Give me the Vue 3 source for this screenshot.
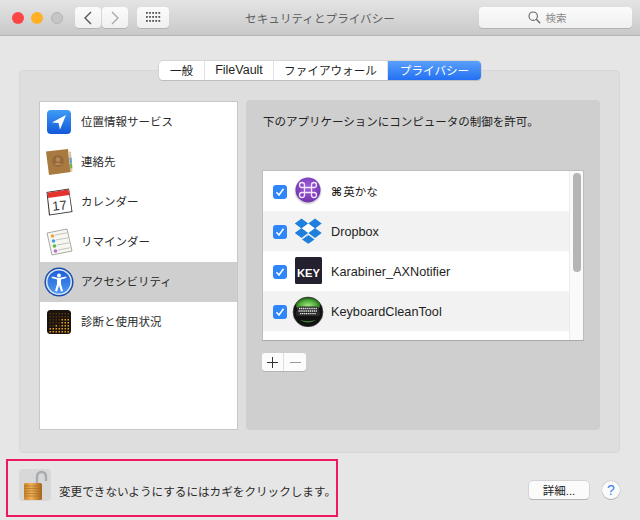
<script setup>
const tabs = [
  { label: '一般', w: 46 },
  { label: 'FileVault', w: 69, latin: true },
  { label: 'ファイアウォール', w: 114 },
  { label: 'プライバシー', w: 93, active: true },
]
const services = [
  { id: 'loc', label: '位置情報サービス' },
  { id: 'contacts', label: '連絡先' },
  { id: 'cal', label: 'カレンダー' },
  { id: 'rem', label: 'リマインダー' },
  { id: 'acc', label: 'アクセシビリティ', selected: true },
  { id: 'diag', label: '診断と使用状況' },
]
const apps = [
  { id: 'cmd', glyph: '⌘', label: '英かな', cjk: true },
  { id: 'dropbox', label: 'Dropbox', alt: true },
  { id: 'key', label: 'Karabiner_AXNotifier' },
  { id: 'clean', label: 'KeyboardCleanTool', alt: true },
]
const dots = []
for (let y = 0; y < 7; y++) for (let x = 0; x < 7; x++) dots.push({ x: 6.5 + x * 3, y: 7 + y * 3, on: y > 4 || (x >= 4 && y > 1) || (x === 2 && y > 3) })
</script>

<template>
  <div class="window">
    <header class="titlebar">
      <div class="tb-left">
        <span class="light red"></span>
        <span class="light yellow"></span>
        <span class="light grey"></span>
        <div class="nav">
          <button class="tb-btn nav-btn">
            <svg width="10" height="14" viewBox="0 0 10 14"><path d="M8 1 L2 7 L8 13" fill="none" stroke="#555" stroke-width="1.4"/></svg>
          </button>
          <button class="tb-btn nav-btn">
            <svg width="10" height="14" viewBox="0 0 10 14"><path d="M2 1 L8 7 L2 13" fill="none" stroke="#aaa" stroke-width="1.4"/></svg>
          </button>
        </div>
        <button class="tb-btn grid-btn">
          <svg width="15" height="11" viewBox="0 0 15 11"><g fill="#555"><rect v-for="n in 15" :key="n" :x="((n - 1) % 5) * 3.1" :y="Math.floor((n - 1) / 5) * 4" width="1.8" height="1.8"/></g></svg>
        </button>
      </div>
      <div class="title">セキュリティとプライバシー</div>
      <div class="tb-right">
        <div class="tb-btn search">
          <svg width="13" height="13" viewBox="0 0 13 13"><circle cx="5.2" cy="5.2" r="4.2" fill="none" stroke="#666" stroke-width="1.1"/><path d="M8.3 8.3 L12.2 12.2" stroke="#666" stroke-width="1.3"/></svg>
          <span>検索</span>
        </div>
      </div>
    </header>

    <nav class="tabs">
      <div v-for="t in tabs" :key="t.label" class="tab" :class="{ active: t.active, latin: t.latin }" :style="{ width: t.w + 'px' }">{{ t.label }}</div>
    </nav>

    <section class="group">
      <ul class="sidebar">
        <li v-for="s in services" :key="s.id" class="svc" :class="{ selected: s.selected }">
          <svg class="svc-icon" width="32" height="32" viewBox="0 0 32 32">
            <template v-if="s.id === 'loc'">
              <defs><linearGradient id="locg" x1="0" y1="0" x2="0" y2="1"><stop offset="0" stop-color="#3f9cf6"/><stop offset="1" stop-color="#1257d8"/></linearGradient></defs>
              <rect x="4" y="4" width="24" height="24" rx="4" fill="url(#locg)"/>
              <path d="M23 9 L9 16.5 L15.5 17 L17 23.5 Z" fill="#fff"/>
            </template>
            <template v-else-if="s.id === 'contacts'">
              <path d="M3 5.500 L25 3 L28 26 L6 29 Z" fill="#a97a3f"/>
              <path d="M25 6 L28 5.500 L29.500 25 L27.500 26 Z" fill="#d9c9a8"/>
              <path d="M26.500 12 L28.500 11.500 L29 17 L27 17.500 Z" fill="#5f9fd8"/>
              <path d="M27 18 L29 17.500 L29.300 22 L27.500 22.500 Z" fill="#72ad4b"/>
              <circle cx="15" cy="15" r="6" fill="#96693a"/>
              <circle cx="15" cy="13.500" r="2.200" fill="#b38a58"/>
              <path d="M11 19 Q15 14.500 19 19 Z" fill="#b38a58"/>
            </template>
            <template v-else-if="s.id === 'cal'">
              <path d="M3.500 6 L26 2.500 L29.500 26 L6 29.500 Z" fill="#333"/>
              <path d="M4.500 6.800 L25.500 3.500 L28.500 25.200 L7 28.500 Z" fill="#fff"/>
              <path d="M4.500 6.800 L25.500 3.500 L26.300 9 L5.300 12 Z" fill="#e5322d"/>
              <text x="16.500" y="24" font-size="13" text-anchor="middle" fill="#333" font-family="Liberation Sans, sans-serif" transform="rotate(-6 16 20)">17</text>
            </template>
            <template v-else-if="s.id === 'rem'">
              <path d="M4 7 L24 3 L29 25 L9 29 Z" fill="#f7f6f1" stroke="#a9a9a3" stroke-width="1"/>
              <g stroke="#c4c4c0" stroke-width="1"><path d="M12 9 L24 6.800"/><path d="M13 14 L25 11.800"/><path d="M14 19 L26 16.800"/><path d="M15 24 L27 21.800"/></g>
              <circle cx="9.500" cy="10" r="1.800" fill="#f2a33a"/>
              <circle cx="10.500" cy="15" r="1.800" fill="#3d9de8"/>
              <circle cx="11.500" cy="20" r="1.800" fill="#5cb84a"/>
              <circle cx="12.500" cy="25" r="1.800" fill="#b26fd0"/>
            </template>
            <template v-else-if="s.id === 'acc'">
              <defs><linearGradient id="accg" x1="0" y1="0" x2="0" y2="1"><stop offset="0" stop-color="#1d5fd6"/><stop offset="1" stop-color="#4d97f2"/></linearGradient></defs>
              <circle cx="16" cy="16" r="14.500" fill="#1a4fae"/>
              <circle cx="16" cy="16" r="13" fill="#dfe8f3"/>
              <circle cx="16" cy="16" r="11.500" fill="url(#accg)"/>
              <circle cx="16" cy="9.500" r="2" fill="#fff"/>
              <path d="M8.500 12 L14 13.500 L14 18 L12 25 L14 25.500 L16 19.500 L18 25.500 L20 25 L18 18 L18 13.500 L23.500 12 L23 10.500 L16 12 L9 10.500 Z" fill="#fff"/>
            </template>
            <template v-else>
              <rect x="4" y="4" width="24" height="24" rx="3.500" fill="#1b130c"/>
              <rect v-for="(d, i) in dots" :key="i" :x="d.x" :y="d.y" width="1.500" height="1.500" :fill="d.on ? '#e8a020' : '#4d3412'"/>
            </template>
          </svg>
          <span>{{ s.label }}</span>
        </li>
      </ul>

      <div class="panel">
        <p class="panel-title">下のアプリケーションにコンピュータの制御を許可。</p>
        <div class="list">
          <div class="rows">
            <div v-for="a in apps" :key="a.id" class="row" :class="{ alt: a.alt }">
              <span class="check">
                <svg width="10" height="10" viewBox="0 0 10 10"><path d="M1.500 5.200 L4 8 L8.500 1.800" fill="none" stroke="#fff" stroke-width="1.500"/></svg>
              </span>
              <svg class="app-icon" width="32" height="32" viewBox="0 0 32 32">
                <template v-if="a.id === 'cmd'">
                  <defs><radialGradient id="cmdg" cx=".5" cy=".4" r=".6"><stop offset="0" stop-color="#a55fdc"/><stop offset="1" stop-color="#6f33ad"/></radialGradient></defs>
                  <circle cx="16" cy="16" r="13.500" fill="#dcdcdc"/>
                  <circle cx="16" cy="15" r="12.500" fill="url(#cmdg)"/>
                  <path d="M12.500 12 V10 A2.500 2.500 0 1 0 10 12.500 H22 A2.500 2.500 0 1 0 19.500 10 V20 A2.500 2.500 0 1 0 22 17.500 H10 A2.500 2.500 0 1 0 12.500 20 Z" fill="none" stroke="#f2e8fb" stroke-width="1.300"/>
                </template>
                <template v-else-if="a.id === 'dropbox'">
                  <g fill="#1e7fdc">
                    <path d="M9.500 3.500 L16.200 8.500 L9.500 13.500 L2.800 8.500 Z"/>
                    <path d="M23 3.500 L29.700 8.500 L23 13.500 L16.300 8.500 Z"/>
                    <path d="M9.500 13 L16.200 18 L9.500 23 L2.800 18 Z"/>
                    <path d="M23 13 L29.700 18 L23 23 L16.300 18 Z"/>
                    <path d="M16.300 20 L22.500 24.500 L16.300 28.800 L10 24.500 Z"/>
                  </g>
                  <path d="M16.300 8.800 L22.500 13.300 L16.300 17.700 L10 13.300 Z" fill="#fff"/>
                </template>
                <template v-else-if="a.id === 'key'">
                  <rect x="3" y="2" width="27" height="27" rx="1.500" fill="#24202f"/>
                  <text x="16.500" y="21.500" font-size="11.200" font-weight="700" text-anchor="middle" fill="#fff" font-family="Liberation Sans, sans-serif">KEY</text>
                </template>
                <template v-else>
                  <defs>
                    <radialGradient id="clg" cx=".5" cy=".55" r=".6"><stop offset="0" stop-color="#a8e884"/><stop offset=".6" stop-color="#4da836"/><stop offset="1" stop-color="#123f10"/></radialGradient>
                  </defs>
                  <circle cx="16" cy="17" r="15" fill="#121212" stroke="#555" stroke-width=".6"/>
                  <ellipse cx="16" cy="10" rx="12" ry="7.500" fill="url(#clg)"/>
                  <path d="M8 25 Q16 30 24 25 Q16 27 8 25 Z" fill="#3f7a33"/>
                  <path d="M7.500 11.500 H24.500 Q26.500 11.500 27 14 L28 19 Q28 21 26 21 H6 Q4 21 4 19 L5 14 Q5.500 11.500 7.500 11.500 Z" fill="#2a2a2a"/>
                  <g stroke="#e4e4e4" stroke-width="1.300" stroke-dasharray="1.300 .6"><path d="M7 13.500 H25"/><path d="M6.500 16 H25.500"/><path d="M8 18.600 H24"/></g>
                </template>
              </svg>
              <span class="app-name" :class="{ cjk: a.cjk }"><span v-if="a.glyph" class="glyph">{{ a.glyph }}</span>{{ a.label }}</span>
            </div>
          </div>
          <div class="scrolltrack"><div class="thumb"></div></div>
        </div>
        <div class="plusminus">
          <button class="pm">
            <svg width="11" height="11" viewBox="0 0 11 11"><path d="M5.500 0 V11 M0 5.500 H11" stroke="#333" stroke-width="1"/></svg>
          </button>
          <button class="pm">
            <svg width="11" height="11" viewBox="0 0 11 11"><path d="M0 5.500 H11" stroke="#999" stroke-width="1"/></svg>
          </button>
        </div>
      </div>
    </section>

    <footer class="footer">
      <div class="lock-wrap">
        <svg width="32" height="32" viewBox="0 0 32 32">
          <path d="M18 15 V8 Q18 3 22.500 3 Q27 3 27 8 V12" fill="none" stroke="#a7abb2" stroke-width="2.400"/>
          <defs><linearGradient id="lockg" x1="0" y1="0" x2="1" y2="0"><stop offset="0" stop-color="#c9822c"/><stop offset=".4" stop-color="#eeb258"/><stop offset="1" stop-color="#a86416"/></linearGradient></defs>
          <rect x="5" y="14" width="18" height="17" rx="1.500" fill="url(#lockg)"/>
          <g stroke="#a66a1e" stroke-width=".6"><path d="M5 17 H23"/><path d="M5 19.500 H23"/><path d="M5 22 H23"/><path d="M5 24.500 H23"/><path d="M5 27 H23"/></g>
        </svg>
      </div>
      <span class="lock-text">変更できないようにするにはカギをクリックします。</span>
      <button class="detail">詳細...</button>
      <button class="help">?</button>
      <div class="annot"></div>
    </footer>
  </div>
</template>

<style scoped>
.window {
  width: 640px;
  height: 520px;
  overflow: hidden;
  background: #e6e6e6;
  display: flex;
  flex-direction: column;
  font-family: "Liberation Sans", "Noto Sans CJK JP", sans-serif;
  font-size: 11.5px;
  color: #2a2a2a;
}
button { font-family: inherit; padding: 0; margin: 0; }

.titlebar {
  height: 36px;
  flex: none;
  box-sizing: border-box;
  display: grid;
  grid-template-columns: 1fr auto 1fr;
  align-items: center;
  background: linear-gradient(#e4e4e4, #c9c9c9);
  border-bottom: 1px solid #b4b4b4;
}
.tb-left { display: flex; align-items: center; padding-left: 12px; }
.light { width: 12px; height: 12px; border-radius: 50%; margin-right: 7px; box-sizing: border-box; }
.red { background: #fc4646; }
.yellow { background: #fdb124; }
.grey { background: #c6c6c6; border: 1px solid #b3b3b3; margin-right: 0; margin-left: 1px; }
.tb-btn {
  background: linear-gradient(#fbfbfb, #f0f0f0);
  border: none;
  border-radius: 4px;
  box-shadow: 0 1px 0 #b3b3b3;
  height: 21px;
  display: flex;
  align-items: center;
  justify-content: center;
}
.nav { display: flex; gap: 1px; margin-left: 12px; }
.nav-btn { width: 26px; }
.grid-btn { width: 32px; margin-left: 9px; }
.title { font-size: 11.6px; color: #5e5e5e; }
.tb-right { display: flex; justify-content: flex-end; padding-right: 8px; }
.search { width: 153px; box-sizing: border-box; padding-right: 17px; gap: 5px; color: #8a8a8a; font-size: 10.5px; }

.tabs {
  display: flex;
  align-self: flex-start;
  margin: 25px 0 0 159px;
  position: relative;
  z-index: 1;
  height: 19px;
  border-radius: 4px;
  background: #fff;
  box-shadow: 0 0 0 .5px #c4c4c4, 0 1px 0 #b8b8b8;
  overflow: hidden;
}
.tab {
  box-sizing: border-box;
  text-align: center;
  line-height: 19px;
  font-size: 11.6px;
  color: #1e1e1e;
  border-right: 1px solid #e2e2e2;
}
.tab.latin { font-size: 12.5px; }
.tab.active {
  background: linear-gradient(#5aa0fb, #2470f3);
  color: #fff;
  border-right: none;
}

.group {
  margin: -10px 20px 0 19px;
  height: 383px;
  box-sizing: border-box;
  padding: 30px 19px 22px 19px;
  background: #dedede;
  border: 1px solid #d8d8d8;
  border-radius: 4px;
  display: flex;
  gap: 8px;
}
.sidebar {
  list-style: none;
  margin: 0;
  padding: 0;
  width: 199px;
  flex: none;
  box-sizing: border-box;
  background: #fff;
  border: 1px solid #c8c8c8;
}
.svc {
  height: 40px;
  display: flex;
  align-items: center;
  padding-left: 3px;
  gap: 6px;
  color: #2a2a2a;
}
.svc span { margin-top: -2px; }
.svc.selected { background: #cfcfcf; }
.svc-icon { flex: none; }

.panel {
  flex: 1;
  background: #cfcfcf;
  border-radius: 4px;
  padding: 0 16px;
  display: flex;
  flex-direction: column;
  margin-top: -1px;
}
.panel-title { margin: 15px 0 0 1px; font-size: 11.5px; height: 55px; line-height: 15px; color: #222; }
.list {
  position: relative;
  height: 171px;
  flex: none;
  box-sizing: border-box;
  background: #fff;
  border: 1px solid #bdbdbd;
  border-bottom-color: #aaa;
  display: flex;
  overflow: hidden;
}
.rows { flex: 1; }
.row { height: 40px; display: flex; align-items: center; padding-left: 10px; }
.row.alt { background: #f2f2f2; }
.check {
  width: 14px;
  height: 14px;
  border-radius: 3px;
  background: #2f86fb;
  display: flex;
  align-items: center;
  justify-content: center;
  flex: none;
  margin-top: 1px;
}
.app-icon { flex: none; margin-left: 5px; }
.app-name { margin: 2px 0 0 7px; color: #1e1e1e; font-size: 12.7px; }
.app-name.cjk { font-size: 11.5px; margin-top: 0; }
.glyph { font-family: "DejaVu Sans", sans-serif; font-size: 12px; font-weight: 700; margin-right: 1px; }
.scrolltrack { width: 14px; flex: none; background: #fafafa; border-left: 1px solid #ececec; box-sizing: border-box; padding: 2px 3px; }
.thumb { height: 99px; border-radius: 4px; background: #b5b5b5; width: 8px; }

.plusminus {
  display: flex;
  align-self: flex-start;
  margin-top: 12px;
  background: #fcfcfc;
  border-radius: 3px;
  box-shadow: 0 1px 0 #b4b4b4;
}
.pm { width: 22px; height: 18px; background: transparent; border: none; border-right: 1px solid #dedede; display: flex; align-items: center; justify-content: center; }
.pm:last-child { border-right: none; }

.footer {
  position: relative;
  flex: 1;
  display: flex;
  align-items: flex-start;
  padding: 16px 20px 0 19px;
}
.lock-wrap { width: 32px; height: 32px; background: #d8d8d8; border-radius: 4px; flex: none; }
.lock-text { margin: 15px 0 0 8px; line-height: 15px; color: #2a2a2a; white-space: nowrap; font-size: 11.6px; }
.detail {
  margin: 12px 0 0 auto;
  width: 60px;
  height: 18px;
  background: #fbfbfb;
  border: none;
  border-radius: 4px;
  box-shadow: 0 0 0 .5px #c0c0c0, 0 1px 0 #aaa;
  font-size: 11.5px;
  color: #222;
}
.help {
  margin: 12px 0 0 13px;
  width: 18px;
  height: 18px;
  border-radius: 50%;
  border: none;
  background: #fbfbfb;
  box-shadow: 0 0 0 .5px #c0c0c0, 0 1px 0 #aaa;
  color: #3a82f0;
  font-size: 14px;
  line-height: 18px;
}
.annot {
  position: absolute;
  left: 6px;
  top: 6px;
  width: 332px;
  height: 58px;
  box-sizing: border-box;
  border: 2.500px solid #f0185f;
}
</style>
